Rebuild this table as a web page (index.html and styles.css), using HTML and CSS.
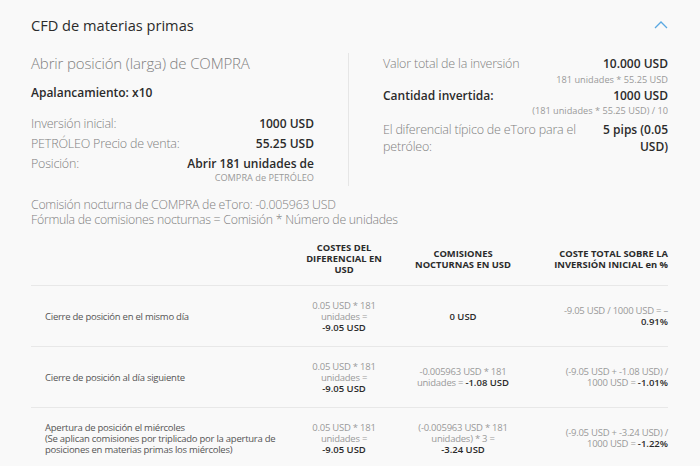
FILE: index.html
```html
<!DOCTYPE html>
<html lang="es">
<head>
<meta charset="utf-8">
<title>CFD de materias primas</title>
<link rel="stylesheet" href="styles.css">
</head>
<body>
<div class="panel">
  <div class="header">
    <h1 class="title">CFD de materias primas</h1>
    <svg class="chevron" width="14" height="9" viewBox="0 0 14 9"><polyline points="1,8 7,2 13,8" fill="none" stroke="#5aa9e2" stroke-width="1.3"/></svg>
  </div>

  <div class="summary">
    <div class="col col-left">
      <div class="subtitle">Abrir posición (larga) de COMPRA</div>
      <div class="leverage">Apalancamiento: x10</div>
      <div class="rows">
        <div class="row"><span class="label">Inversión inicial:</span><span class="value">1000 USD</span></div>
        <div class="row"><span class="label">PETRÓLEO Precio de venta:</span><span class="value">55.25 USD</span></div>
        <div class="row"><span class="label">Posición:</span><span class="value">Abrir 181 unidades de</span></div>
        <div class="note n-left">COMPRA de PETRÓLEO</div>
      </div>
    </div>
    <div class="col col-right">
      <div class="row r-first"><span class="label">Valor total de la inversión</span><span class="value">10.000 USD</span></div>
      <div class="note n-1">181 unidades * 55.25 USD</div>
      <div class="row r-mid"><span class="label strong">Cantidad invertida:</span><span class="value">1000 USD</span></div>
      <div class="note n-2">(181 unidades * 55.25 USD) / 10</div>
      <div class="row r-last"><span class="label">El diferencial típico de eToro para el petróleo:</span><span class="value wrapv">5 pips (0.05 USD)</span></div>
    </div>
  </div>

  <div class="commission">
    <div>Comisión nocturna de COMPRA de eToro: -0.005963 USD</div>
    <div>Fórmula de comisiones nocturnas = Comisión * Número de unidades</div>
  </div>

  <div class="table">
    <div class="cell th"></div>
    <div class="cell th center"><div>COSTES DEL<br>DIFERENCIAL EN<br>USD</div></div>
    <div class="cell th center"><div>COMISIONES<br>NOCTURNAS EN USD</div></div>
    <div class="cell th right"><div>COSTE TOTAL SOBRE LA<br>INVERSIÓN INICIAL en %</div></div>

    <div class="cell td first"><div>Cierre de posición en el mismo día</div></div>
    <div class="cell td center muted"><div>0.05 USD * 181<br>unidades =<br><b>-9.05 USD</b></div></div>
    <div class="cell td center"><div><b>0 USD</b></div></div>
    <div class="cell td right muted"><div>-9.05 USD / 1000 USD = –<br><b>0.91%</b></div></div>

    <div class="cell td first"><div>Cierre de posición al día siguiente</div></div>
    <div class="cell td center muted"><div>0.05 USD * 181<br>unidades =<br><b>-9.05 USD</b></div></div>
    <div class="cell td center muted"><div>-0.005963 USD * 181<br>unidades = <b>-1.08 USD</b></div></div>
    <div class="cell td right muted"><div>(-9.05 USD + -1.08 USD) /<br>1000 USD = <b>-1.01%</b></div></div>

    <div class="cell td first"><div>Apertura de posición el miércoles<br>(Se aplican comisiones por triplicado por la apertura de<br>posiciones en materias primas los miércoles)</div></div>
    <div class="cell td center muted"><div>0.05 USD * 181<br>unidades =<br><b>-9.05 USD</b></div></div>
    <div class="cell td center muted"><div>(-0.005963 USD * 181<br>unidades) * 3 =<br><b>-3.24 USD</b></div></div>
    <div class="cell td right muted"><div>(-9.05 USD + -3.24 USD) /<br>1000 USD = <b>-1.22%</b></div></div>
  </div>
</div>
</body>
</html>
```

FILE: styles.css
```css
html, body {
  margin: 0;
  padding: 0;
  background: #f9f9f9;
}
body {
  font-family: "Open Sans", "Noto Sans", "Liberation Sans", sans-serif;
  color: #333;
  width: 700px;
  height: 466px;
  overflow: hidden;
}
.panel {
  padding: 14px 32px 0 31px;
}
.header {
  display: flex;
  justify-content: space-between;
  align-items: center;
  height: 22px;
}
.title {
  margin: 0;
  font-size: 14.6px;
  font-weight: 400;
  line-height: 22px;
  color: #2b2b2b;
}
.chevron {
  margin-top: -1px;
}
.summary {
  display: grid;
  grid-template-columns: 318px 1fr;
  margin-top: 17px;
}
.col-left {
  padding-right: 34px;
  padding-bottom: 2px;
  border-right: 1px solid #e6e6e6;
}
.col-right {
  padding-left: 34px;
}
.subtitle {
  font-size: 15px;
  font-weight: 300;
  letter-spacing: -0.15px;
  line-height: 20px;
  color: #808080;
}
.leverage {
  margin-top: 11px;
  font-size: 12px;
  font-weight: 600;
  line-height: 18px;
  color: #2b2b2b;
}
.rows {
  margin-top: 12px;
}
.row {
  display: flex;
  justify-content: space-between;
  align-items: flex-start;
  gap: 10px;
  font-size: 12px;
  line-height: 20px;
}
.label {
  font-size: 12.5px;
  letter-spacing: -0.2px;
  font-weight: 300;
  color: #808080;
}
.label.strong {
  font-size: 12px;
  letter-spacing: 0;
  font-weight: 600;
  color: #2b2b2b;
}
.value {
  font-weight: 600;
  color: #2b2b2b;
  text-align: right;
  flex-shrink: 0;
}
.note {
  text-align: right;
  font-size: 9.2px;
  line-height: 12px;
  color: #9a9a9a;
}
.n-left {
  margin-top: -2px;
}
.r-first {
  margin-top: 1px;
}
.r-mid {
  margin-top: 0;
}
.n-2 {
  margin-top: -1px;
}
.r-last {
  margin-top: 4px;
  line-height: 17px;
}
.value.wrapv {
  width: 70px;
  flex-shrink: 0;
}
.commission {
  margin-top: 11px;
  font-size: 12.3px;
  letter-spacing: -0.25px;
  font-weight: 300;
  line-height: 15px;
  color: #808080;
}
.table {
  display: grid;
  grid-template-columns: 255px 116px 122px 144px;
  margin-top: 15px;
}
.cell {
  display: flex;
  flex-direction: column;
  justify-content: center;
  font-size: 9.5px;
  letter-spacing: -0.25px;
  line-height: 11px;
}
.th {
  font-size: 9.4px;
  letter-spacing: 0;
  font-weight: 700;
  line-height: 11px;
  color: #2b2b2b;
  padding-bottom: 10px;
  border-bottom: 1px solid #e8e8e8;
}
.td {
  height: 61px;
  box-sizing: border-box;
  border-bottom: 1px solid #e8e8e8;
  color: #3a3a3a;
}
.first {
  padding-left: 14px;
  white-space: nowrap;
  color: #555;
}
.center {
  text-align: center;
  align-items: center;
}
.right {
  text-align: right;
  align-items: flex-end;
}
.muted {
  color: #9a9a9a;
}
.td b {
  font-weight: 600;
  letter-spacing: 0;
  color: #2b2b2b;
}
```
